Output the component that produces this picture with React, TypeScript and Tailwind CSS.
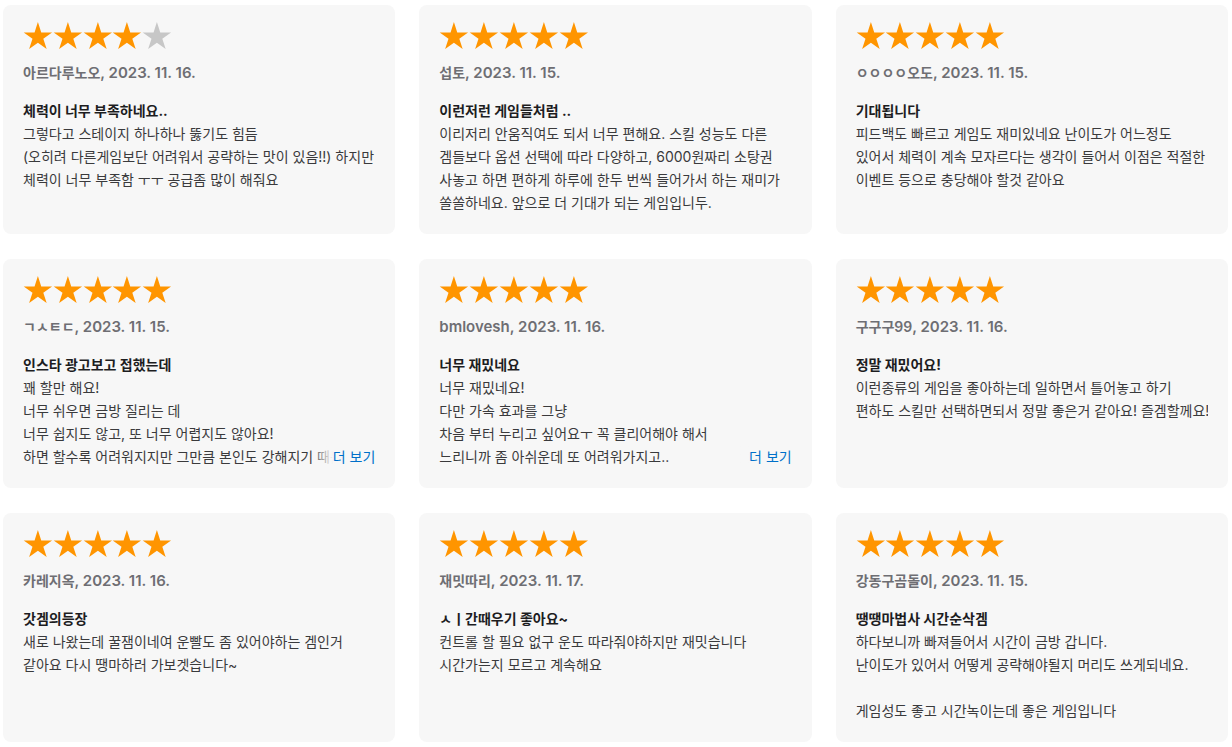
import React from 'react'

type Review = {
    stars: number
    author: string
    date: string
    title: string
    lines: string[]
    more?: boolean
}

const reviews: Review[] = [
    {
        stars: 4,
        author: '아르다루노오',
        date: '2023. 11. 16.',
        title: '체력이 너무 부족하네요..',
        lines: [
            '그렇다고 스테이지 하나하나 뚫기도 힘듬',
            '(오히려 다른게임보단 어려워서 공략하는 맛이 있음!!) 하지만',
            '체력이 너무 부족함 ㅜㅜ 공급좀 많이 해줘요',
        ],
    },
    {
        stars: 5,
        author: '섭토',
        date: '2023. 11. 15.',
        title: '이런저런 게임들처럼 ..',
        lines: [
            '이리저리 안움직여도 되서 너무 편해요. 스킬 성능도 다른',
            '겜들보다 옵션 선택에 따라 다양하고, 6000원짜리 소탕권',
            '사놓고 하면 편하게 하루에 한두 번씩 들어가서 하는 재미가',
            '쏠쏠하네요. 앞으로 더 기대가 되는 게임입니두.',
        ],
    },
    {
        stars: 5,
        author: 'ㅇㅇㅇㅇ오도',
        date: '2023. 11. 15.',
        title: '기대됩니다',
        lines: [
            '피드백도 빠르고 게임도 재미있네요 난이도가 어느정도',
            '있어서 체력이 계속 모자르다는 생각이 들어서 이점은 적절한',
            '이벤트 등으로 충당해야 할것 같아요',
        ],
    },
    {
        stars: 5,
        author: 'ㄱㅅㅌㄷ',
        date: '2023. 11. 15.',
        title: '인스타 광고보고 접했는데',
        lines: [
            '꽤 할만 해요!',
            '너무 쉬우면 금방 질리는 데',
            '너무 쉽지도 않고, 또 너무 어렵지도 않아요!',
            '하면 할수록 어려워지지만 그만큼 본인도 강해지기 때문에',
        ],
        more: true,
    },
    {
        stars: 5,
        author: 'bmlovesh',
        date: '2023. 11. 16.',
        title: '너무 재밌네요',
        lines: [
            '너무 재밌네요!',
            '다만 가속 효과를 그냥',
            '차음 부터 누리고 싶어요ㅜ 꼭 클리어해야 해서',
            '느리니까 좀 아쉬운데 또 어려워가지고..',
        ],
        more: true,
    },
    {
        stars: 5,
        author: '구구구99',
        date: '2023. 11. 16.',
        title: '정말 재밌어요!',
        lines: [
            '이런종류의 게임을 좋아하는데 일하면서 틀어놓고 하기',
            '편하도 스킬만 선택하면되서 정말 좋은거 같아요! 즐겜할께요!',
        ],
    },
    {
        stars: 5,
        author: '카레지옥',
        date: '2023. 11. 16.',
        title: '갓겜의등장',
        lines: [
            '새로 나왔는데 꿀잼이네여 운빨도 좀 있어야하는 겜인거',
            '같아요 다시 땡마하러 가보겟습니다~',
        ],
    },
    {
        stars: 5,
        author: '재밋따리',
        date: '2023. 11. 17.',
        title: 'ㅅㅣ간때우기 좋아요~',
        lines: [
            '컨트롤 할 필요 없구 운도 따라줘야하지만 재밋습니다',
            '시간가는지 모르고 계속해요',
        ],
    },
    {
        stars: 5,
        author: '강동구곰돌이',
        date: '2023. 11. 15.',
        title: '땡땡마법사 시간순삭겜',
        lines: [
            '하다보니까 빠져들어서 시간이 금방 갑니다.',
            '난이도가 있어서 어떻게 공략해야될지 머리도 쓰게되네요.',
            '',
            '게임성도 좋고 시간녹이는데 좋은 게임입니다',
        ],
    },
]

const hangul = /[가-힣ㄱ-ㅎㅏ-ㅣ]/

function Star({ filled }: { filled: boolean }) {
    return (
        <svg viewBox="0 0 30 28" className="w-[29.8px] h-[28px] shrink-0">
            <polygon
                points="15,0 18.37,10.36 29.27,10.36 20.45,16.77 23.82,27.14 15,20.73 6.18,27.14 9.55,16.77 0.73,10.36 11.63,10.36"
                fill={filled ? '#ff9500' : '#c7c7c7'}
            />
        </svg>
    )
}

function ReviewCard({ review }: { review: Review }) {
    // hangul names sit a little smaller than the latin date
    const nameCls = hangul.test(review.author) ? 'text-[14px]' : ''
    return (
        <div className="h-[229px] bg-[#f7f7f7] rounded-[8px] px-5 pt-[17px]">
            <div className="flex">
                {[0, 1, 2, 3, 4].map((i) => (
                    <Star key={i} filled={i < review.stars} />
                ))}
            </div>
            <p className="mt-[13px] text-[15px] leading-[20px] font-semibold text-[#6e6e73] whitespace-nowrap">
                <span className={nameCls}>{review.author}</span>, {review.date}
            </p>
            <p className="mt-[16px] text-[14px] leading-[23px] font-bold text-[#1d1d1f] whitespace-nowrap">
                {review.title}
            </p>
            <div className="relative max-h-[92px] overflow-hidden text-[14px] leading-[23px] text-[#3a3a3c]">
                {review.lines.map((line, i) => (
                    <div key={i} className="h-[23px] whitespace-nowrap overflow-hidden">
                        {line}
                    </div>
                ))}
                {review.more && (
                    <div className="absolute right-0 bottom-0 flex h-[23px]">
                        <div className="w-[22px] bg-linear-to-r from-[#f7f7f7]/0 to-[#f7f7f7]" />
                        <span className="bg-[#f7f7f7] text-[#0070c9]">더 보기</span>
                    </div>
                )}
            </div>
        </div>
    )
}

export default function App() {
    return (
        <div className="w-[1232px] h-[747px] bg-white font-['Inter','Noto_Sans_CJK_KR',sans-serif] pl-[3px] pt-[5px] overflow-hidden">
            <div className="w-[1225px] grid grid-cols-3 gap-x-6 gap-y-[25px]">
                {reviews.map((r, i) => (
                    <ReviewCard key={i} review={r} />
                ))}
            </div>
        </div>
    )
}
